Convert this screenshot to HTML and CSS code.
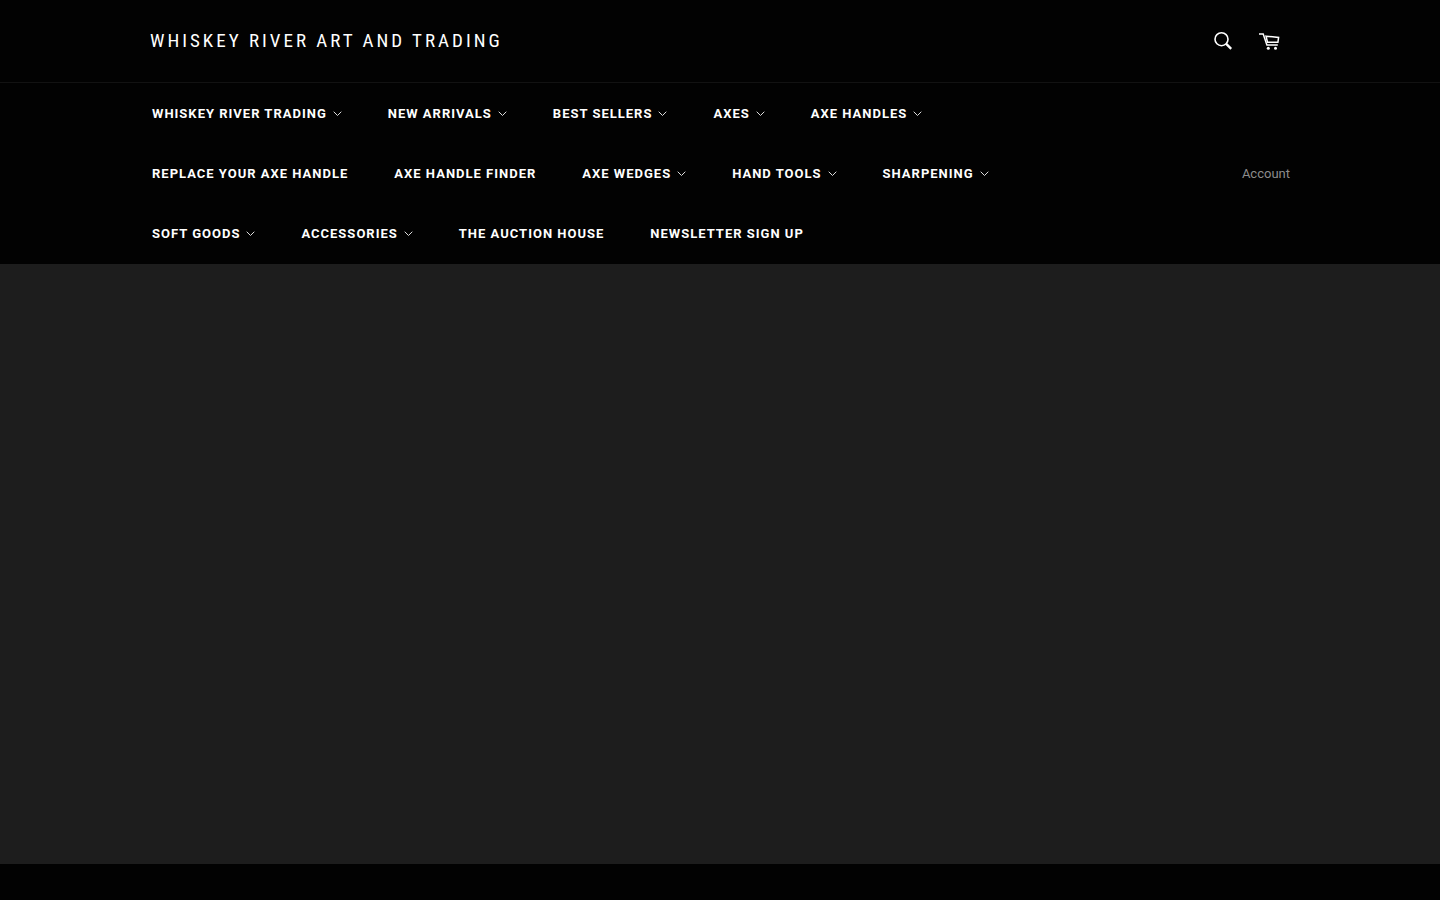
FILE: index.html
```html
<!DOCTYPE html>
<html lang="en">
<head>
    <meta charset="UTF-8">
    <meta name="viewport" content="width=device-width, initial-scale=1.0">
    <title>Whiskey River Art and Trading</title>
    <link rel="stylesheet" href="styles.css">
</head>
<body>
    <header class="site-header">
        <div class="header-top">
            <div class="page-width header-row">
                <a href="#" class="site-title">Whiskey River Art and Trading</a>
                <div class="header-icons">
                    <button type="button" class="icon-btn" aria-label="Search">
                        <svg class="icon" viewBox="0 0 22 22" fill="none" stroke="currentColor">
                            <circle cx="9.5" cy="9.2" r="6.5" stroke-width="1.6"/>
                            <path d="M14 13.7L19.2 18.8" stroke-width="2.4"/>
                        </svg>
                    </button>
                    <a href="#" class="icon-btn" aria-label="Cart">
                        <svg class="icon" viewBox="0 0 22 22" fill="none" stroke="currentColor" stroke-width="1.5">
                            <path d="M1 4h4.2l3.7 11.1H19.8"/>
                            <path d="M8 6.2l12.6 1.2-.7 4.9H9.5z"/>
                            <circle cx="10.3" cy="18.2" r="1.5" fill="currentColor" stroke="none"/>
                            <circle cx="17.5" cy="18.2" r="1.5" fill="currentColor" stroke="none"/>
                        </svg>
                    </a>
                </div>
            </div>
        </div>
        <nav class="page-width nav-row" aria-label="Main">
            <ul class="nav-list">
                <li><a href="#" class="nav-link">Whiskey River Trading <svg class="chevron" viewBox="0 0 9 9"><path d="M.7 2.7l3.8 3.8 3.8-3.8"/></svg></a></li>
                <li><a href="#" class="nav-link">New Arrivals <svg class="chevron" viewBox="0 0 9 9"><path d="M.7 2.7l3.8 3.8 3.8-3.8"/></svg></a></li>
                <li><a href="#" class="nav-link">Best Sellers <svg class="chevron" viewBox="0 0 9 9"><path d="M.7 2.7l3.8 3.8 3.8-3.8"/></svg></a></li>
                <li><a href="#" class="nav-link">Axes <svg class="chevron" viewBox="0 0 9 9"><path d="M.7 2.7l3.8 3.8 3.8-3.8"/></svg></a></li>
                <li><a href="#" class="nav-link">Axe Handles <svg class="chevron" viewBox="0 0 9 9"><path d="M.7 2.7l3.8 3.8 3.8-3.8"/></svg></a></li>
                <li><a href="#" class="nav-link">Replace Your Axe Handle</a></li>
                <li><a href="#" class="nav-link">Axe Handle Finder</a></li>
                <li><a href="#" class="nav-link">Axe Wedges <svg class="chevron" viewBox="0 0 9 9"><path d="M.7 2.7l3.8 3.8 3.8-3.8"/></svg></a></li>
                <li><a href="#" class="nav-link">Hand Tools <svg class="chevron" viewBox="0 0 9 9"><path d="M.7 2.7l3.8 3.8 3.8-3.8"/></svg></a></li>
                <li><a href="#" class="nav-link">Sharpening <svg class="chevron" viewBox="0 0 9 9"><path d="M.7 2.7l3.8 3.8 3.8-3.8"/></svg></a></li>
                <li><a href="#" class="nav-link">Soft Goods <svg class="chevron" viewBox="0 0 9 9"><path d="M.7 2.7l3.8 3.8 3.8-3.8"/></svg></a></li>
                <li><a href="#" class="nav-link">Accessories <svg class="chevron" viewBox="0 0 9 9"><path d="M.7 2.7l3.8 3.8 3.8-3.8"/></svg></a></li>
                <li><a href="#" class="nav-link">The Auction House</a></li>
                <li><a href="#" class="nav-link">Newsletter Sign Up</a></li>
            </ul>
            <a href="#" class="account-link">Account</a>
        </nav>
    </header>

    <main>
        <section class="slideshow" aria-label="Slideshow"></section>
    </main>
</body>
</html>
```
FILE: styles.css
```css
* {
    margin: 0;
    padding: 0;
    box-sizing: border-box;
}

body {
    background: #020202;
    color: #fff;
    font-family: Roboto, "Liberation Sans", sans-serif;
}

a {
    color: inherit;
    text-decoration: none;
}

.page-width {
    max-width: 1200px;
    margin: 0 auto;
    padding: 0 30px;
}

/* Header */
.header-top {
    border-bottom: 1px solid #121212;
}

.header-row {
    display: flex;
    justify-content: space-between;
    align-items: center;
    min-height: 82px;
}

.site-title {
    font-family: "Roboto Condensed", "Liberation Sans Narrow", Roboto, sans-serif;
    font-size: 19px;
    line-height: 24px;
    letter-spacing: 3px;
    text-transform: uppercase;
}

.header-icons {
    display: flex;
    gap: 24px;
    padding-right: 10px;
}

.icon-btn {
    display: block;
    background: none;
    border: none;
    color: #fff;
    cursor: pointer;
}

.icon {
    display: block;
    width: 22px;
    height: 22px;
}

/* Navigation */
.nav-row {
    display: flex;
    justify-content: space-between;
    align-items: center;
}

.nav-list {
    display: flex;
    flex-wrap: wrap;
    column-gap: 46px;
    max-width: 900px;
    padding-left: 2px;
    list-style: none;
}

.nav-link {
    display: flex;
    align-items: center;
    gap: 6px;
    height: 60px;
    font-size: 13px;
    font-weight: 700;
    letter-spacing: 1px;
    text-transform: uppercase;
    white-space: nowrap;
}

.chevron {
    width: 9px;
    height: 9px;
    fill: none;
    stroke: #ddd;
}

.account-link {
    color: #8c8c8c;
    font-size: 13px;
}

/* Slideshow */
.slideshow {
    height: 600px;
    margin-top: 1px;
    background: #1d1d1d;
}
```
